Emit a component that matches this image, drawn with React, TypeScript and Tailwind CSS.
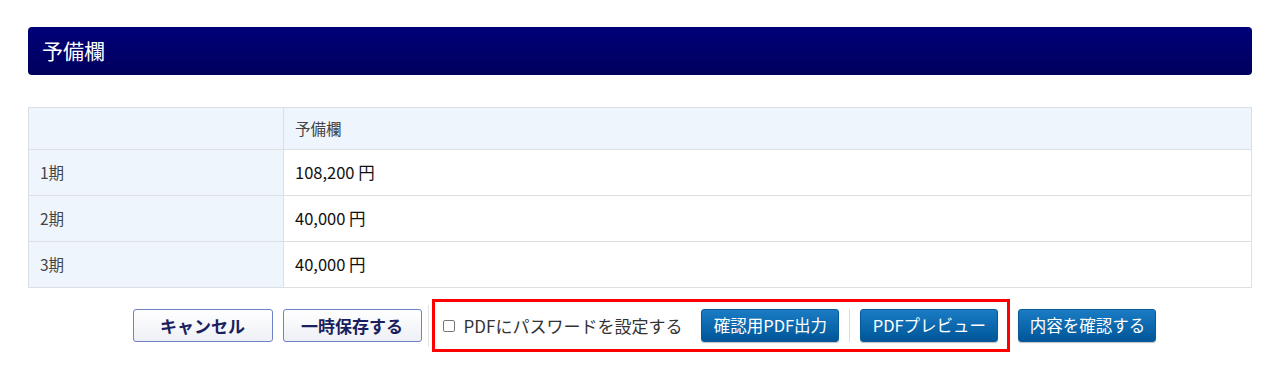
const font = { fontFamily: '"Noto Sans CJK JP", "Noto Sans", sans-serif' }

const rows = [
  { label: "1期", value: "108,200 円" },
  { label: "2期", value: "40,000 円" },
  { label: "3期", value: "40,000 円" },
]

function BlueButton({ children }: { children: React.ReactNode }) {
  return (
    <button
      type="button"
      className="h-[33px] w-[138px] rounded-[3px] border border-[#0a5a98] bg-gradient-to-b from-[#1a7cc4] to-[#005698] text-[16.5px] text-white shadow-[0_1px_1px_rgba(0,0,0,0.25)]"
    >
      {children}
    </button>
  )
}

function OutlineButton({ children, width }: { children: React.ReactNode; width: string }) {
  return (
    <button
      type="button"
      className={`h-[33px] ${width} rounded-[3px] border border-[#6f80c8] bg-gradient-to-b from-white to-[#eef0f6] text-[17px] font-bold text-[#1b1f5e]`}
    >
      {children}
    </button>
  )
}

export default function App() {
  return (
    <div className="min-h-[366px] bg-white px-[28px] pt-[27px]" style={font}>
      <div className="flex h-[48px] items-center rounded-[4px] bg-gradient-to-b from-[#00007a] to-[#00005c] pl-[14px]">
        <h1 className="text-[21px] text-white">予備欄</h1>
      </div>

      <table className="mt-[32px] w-full border-collapse text-[16.5px]">
        <tbody>
          <tr className="h-[42px] bg-[#eef5fc]">
            <td className="w-[255px] border border-[#dcdfe3]" />
            <td className="border border-[#dcdfe3] px-[11px] text-[15.5px] text-[#444]">予備欄</td>
          </tr>
          {rows.map(r => (
            <tr key={r.label} className="h-[46px]">
              <td className="border border-[#dcdfe3] bg-[#eef5fc] px-[11px] text-[15.5px] text-[#444]">{r.label}</td>
              <td className="border border-[#dcdfe3] bg-white px-[11px] text-[#111]">{r.value}</td>
            </tr>
          ))}
        </tbody>
      </table>

      <div className="mt-[11px] flex items-center justify-center pl-[9px]">
        <OutlineButton width="w-[140px]">キャンセル</OutlineButton>
        <div className="ml-[10px]">
          <OutlineButton width="w-[139px]">一時保存する</OutlineButton>
        </div>
        <div className="ml-[6px] h-[42px] w-px bg-[#e2e2e2]" />
        <div className="ml-[3px] flex h-[53px] items-center border-[3px] border-[#ff0000] pl-[8px] pr-[9px]">
          <label className="flex items-center text-[17px] text-[#333]">
            <span className="mr-[9px] h-[12px] w-[12px] rounded-[2px] border border-[#777] bg-white" />
            PDFにパスワードを設定する
          </label>
          <div className="ml-[19px]">
            <BlueButton>確認用PDF出力</BlueButton>
          </div>
          <div className="mx-[10px] h-[33px] w-px bg-[#dddddd]" />
          <BlueButton>PDFプレビュー</BlueButton>
        </div>
        <div className="ml-[8px]">
          <BlueButton>内容を確認する</BlueButton>
        </div>
      </div>
    </div>
  )
}
